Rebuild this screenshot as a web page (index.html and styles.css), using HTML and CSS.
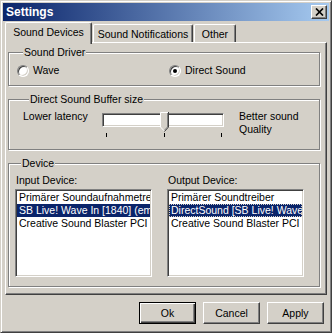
FILE: index.html
```html
<!DOCTYPE html>
<html lang="en">
<head>
    <meta charset="UTF-8">
    <title>Settings</title>
    <link rel="stylesheet" href="styles.css">
</head>
<body>
<div class="window">
    <div class="titlebar">
        <span class="title">Settings</span>
        <span class="close">
            <svg width="9" height="8" viewBox="0 0 9 8"><path d="M1 0.5 L8 7.5 M8 0.5 L1 7.5" stroke="#000" stroke-width="1.7" fill="none"/></svg>
        </span>
    </div>

    <div class="tabs">
        <div class="tab active t1">Sound Devices</div>
        <div class="tab t2">Sound Notifications</div>
        <div class="tab t3">Other</div>
    </div>

    <div class="panel">
        <fieldset class="group driver">
            <legend>Sound Driver</legend>
            <div class="radios">
                <label class="radio"><span class="circle"></span>Wave</label>
                <label class="radio checked"><span class="circle"></span>Direct Sound</label>
            </div>
        </fieldset>

        <fieldset class="group buffer">
            <legend>Direct Sound Buffer size</legend>
            <div class="buffer-row">
                <div class="low">Lower latency</div>
                <div class="slider">
                    <div class="track"></div>
                    <svg class="thumb" width="9" height="20" viewBox="0 0 9 20">
                        <path d="M0 0 H9 V15 L4.5 19.5 L0 15 Z" fill="#d4d0c8"/>
                        <polyline points="0.5,15 0.5,0.5 8,0.5" stroke="#fff" fill="none"/>
                        <polyline points="8.5,0 8.5,15 4.5,19.5" stroke="#404040" fill="none"/>
                        <polyline points="7.5,1 7.5,15 4.5,18.2" stroke="#808080" fill="none"/>
                        <line x1="0.5" y1="15" x2="4" y2="18.7" stroke="#fff"/>
                    </svg>
                    <div class="ticks"><span></span><span></span><span></span></div>
                </div>
                <div class="high">Better sound<br>Quality</div>
            </div>
        </fieldset>

        <fieldset class="group device">
            <legend>Device</legend>
            <div class="lists">
                <div class="col">
                    <div class="caption">Input Device:</div>
                    <ul class="listbox">
                        <li>Primärer Soundaufnahmetreiber</li>
                        <li class="sel">SB Live! Wave In [1840] (emu10k1)</li>
                        <li>Creative Sound Blaster PCI</li>
                    </ul>
                </div>
                <div class="col">
                    <div class="caption">Output Device:</div>
                    <ul class="listbox">
                        <li>Primärer Soundtreiber</li>
                        <li class="sel focus">DirectSound [SB Live! Wave Out [1840]]</li>
                        <li>Creative Sound Blaster PCI</li>
                    </ul>
                </div>
            </div>
        </fieldset>
    </div>

    <div class="buttons">
        <div class="btn default">Ok</div>
        <div class="btn">Cancel</div>
        <div class="btn">Apply</div>
    </div>
</div>
</body>
</html>
```

FILE: styles.css
```css
*{
    box-sizing: border-box;
}
body{
    margin: 0;
    font-family: "Liberation Sans", Arial, sans-serif;
    font-size: 10.5px;
    color: #000;
    background-color: #d4d0c8;
}
.window{
    width: 332px;
    height: 333px;
    background-color: #d4d0c8;
    border: 1px solid;
    border-color: #d4d0c8 #404040 #404040 #d4d0c8;
    box-shadow: inset 1px 1px #fff, inset -1px -1px #808080;
    padding: 2px;
    display: flex;
    flex-direction: column;
}

/* title bar */
.titlebar{
    height: 18px;
    display: flex;
    align-items: center;
    justify-content: space-between;
    padding: 0 2px 0 3px;
    background: linear-gradient(to right, #0a246a, #a6caf0);
    color: #fff;
    font-weight: bold;
    font-size: 12px;
}
.close{
    width: 16px;
    height: 14px;
    background-color: #d4d0c8;
    border: 1px solid;
    border-color: #fff #404040 #404040 #fff;
    box-shadow: inset -1px -1px #808080;
    display: flex;
    align-items: center;
    justify-content: center;
}

/* tabs */
.tabs{
    display: flex;
    align-items: flex-end;
    height: 20px;
    margin-top: 1px;
    padding-left: 2px;
}
.tab{
    height: 18px;
    padding-top: 3px;
    line-height: 13px;
    text-align: center;
    background-color: #d4d0c8;
    border: 1px solid;
    border-bottom: none;
    border-color: #fff #404040 #404040 #fff;
    border-radius: 2px 2px 0 0;
    box-shadow: inset -1px 0 #808080;
}
.tab.active{
    height: 22px;
    margin-bottom: -2px;
    position: relative;
    z-index: 1;
}
.t1{ width: 87px; }
.t2{ width: 100px; margin-left: 1px; }
.t3{ width: 42px; margin-left: 1px; }

/* panel */
.panel{
    margin: 0 2px;
    padding: 3px 6px 7px 2px;
    border: 1px solid;
    border-color: #fff #404040 #404040 #fff;
    box-shadow: inset -1px -1px #808080;
}
.group{
    margin: 0;
    padding: 0;
    border: 1px solid #808080;
    box-shadow: 1px 1px 0 #fff, inset 1px 1px 0 #fff;
    min-width: 0;
}
.group + .group{
    margin-top: 7px;
}
.group legend{
    margin-left: 6px;
    padding: 0 1px;
    line-height: 13px;
    background-color: #d4d0c8;
}
.driver{
    padding: 5px 0 8px 8px;
}
.radios{
    display: grid;
    grid-template-columns: 152px auto;
    line-height: 13px;
}
.radio{
    display: flex;
    align-items: center;
    gap: 4px;
}
.circle{
    width: 12px;
    height: 12px;
    border-radius: 50%;
    border: 1px solid;
    border-color: #808080 #fff #fff #808080;
    background-color: #fff;
    box-shadow: inset 1px 1px #404040, inset -1px -1px #d4d0c8;
    display: flex;
    align-items: center;
    justify-content: center;
}
.checked .circle::after{
    content: "";
    width: 4px;
    height: 4px;
    border-radius: 50%;
    background-color: #000;
}

/* buffer slider */
.buffer{
    padding: 4px 0 12px 14px;
}
.buffer-row{
    display: flex;
    align-items: flex-start;
    line-height: 13px;
}
.low{
    width: 79px;
}
.slider{
    position: relative;
    width: 122px;
    padding-top: 3px;
}
.track{
    height: 14px;
    background-color: #fff;
    border: 1px solid;
    border-color: #808080 #fff #fff #808080;
    box-shadow: inset 1px 1px #404040, inset -1px -1px #d4d0c8;
}
.thumb{
    position: absolute;
    left: 58px;
    top: 2px;
}
.ticks{
    display: flex;
    justify-content: space-between;
    padding: 0 2px 0 4px;
    margin-top: 6px;
}
.ticks span{
    width: 1px;
    height: 4px;
    background-color: #000;
}
.high{
    margin-left: 15px;
}

/* device lists */
.device{
    padding: 4px 0 9px 6px;
}
.lists{
    display: grid;
    grid-template-columns: 137px 137px;
    column-gap: 15px;
}
.caption{
    line-height: 13px;
    padding-left: 1px;
    margin-bottom: 2px;
}
.listbox{
    list-style: none;
    margin: 0;
    padding: 1px;
    height: 88px;
    background-color: #fff;
    border: 1px solid;
    border-color: #808080 #fff #fff #808080;
    box-shadow: inset 1px 1px #404040, inset -1px -1px #d4d0c8;
    overflow: hidden;
}
.listbox li{
    line-height: 13px;
    padding-left: 2px;
    white-space: nowrap;
    overflow: hidden;
}
.listbox .sel{
    background-color: #0a246a;
    color: #fff;
}
.listbox .focus{
    outline: 1px dotted #d4d0c8;
    outline-offset: -1px;
}

/* buttons */
.buttons{
    display: flex;
    justify-content: flex-end;
    gap: 7px;
    margin-top: 7px;
    padding-right: 5px;
}
.btn{
    width: 57px;
    height: 22px;
    line-height: 20px;
    text-align: center;
    border: 1px solid;
    border-color: #fff #404040 #404040 #fff;
    box-shadow: inset -1px -1px #808080;
}
.btn.default{
    border-color: #000;
    box-shadow: inset 1px 1px #fff, inset -1px -1px #404040, inset -2px -2px #808080;
}
```
